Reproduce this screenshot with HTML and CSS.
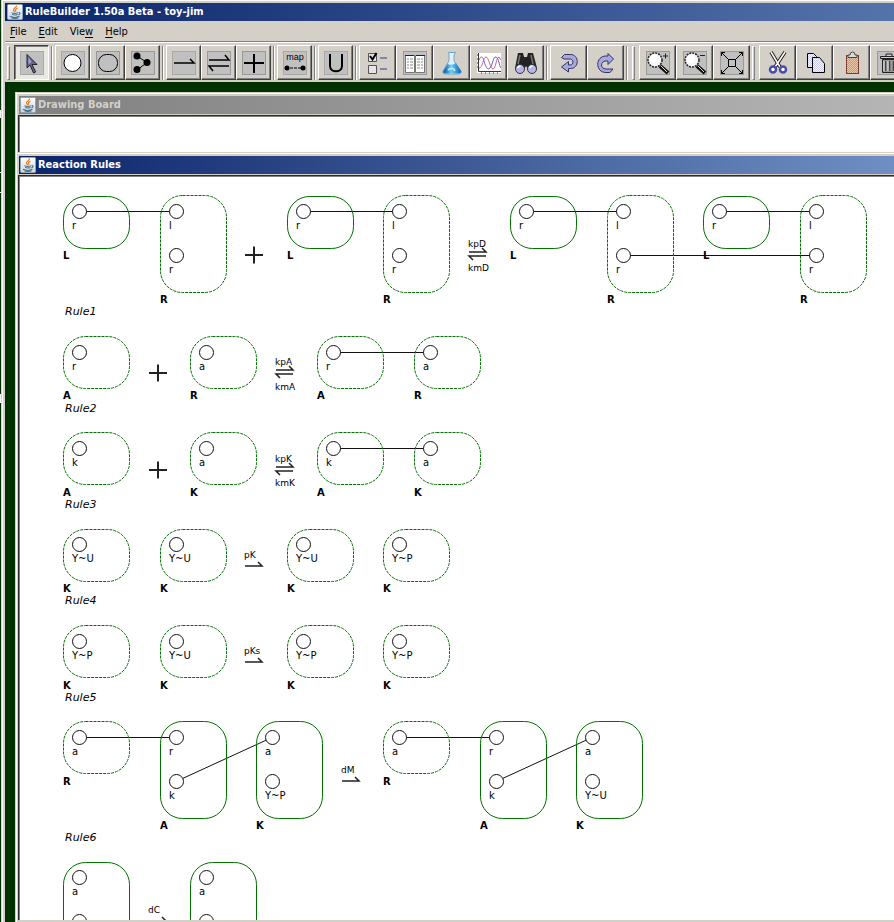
FILE: index.html
```html
<!DOCTYPE html>
<html lang="en">
<head>
<meta charset="utf-8">
<title>RuleBuilder 1.50a Beta - toy-jim</title>
<link rel="stylesheet" href="styles.css">
</head>
<body>
<svg class="defs" aria-hidden="true">
  <defs>
    <linearGradient id="tile" x1="0" y1="0" x2="0" y2="1"><stop offset="0" stop-color="#fff"/><stop offset="1" stop-color="#ccd6dc"/></linearGradient>
    <linearGradient id="flask" x1="0" y1="0" x2="1" y2="0"><stop offset="0" stop-color="#0a4f9a"/><stop offset=".45" stop-color="#6fd0f5"/><stop offset="1" stop-color="#0b62b4"/></linearGradient>
    <pattern id="weave" width="2" height="2" patternUnits="userSpaceOnUse"><rect width="2" height="2" fill="#e8c8a8"/><path d="M0 0h1v1H0zM1 1h1v1H1z" fill="#c49a7c"/></pattern>
    <pattern id="lilac" width="2" height="2" patternUnits="userSpaceOnUse"><rect width="2" height="2" fill="#f4f4ff"/><path d="M0 0h1v1H0zM1 1h1v1H1z" fill="#ccccee"/></pattern>
    <symbol id="java" viewBox="0 0 16 16">
      <rect x=".5" y=".5" width="15" height="15" rx="1" fill="url(#tile)" stroke="#8fa5b5"/>
      <path d="M9.5 1.5C10 3.5 6 4.500 6.500 6c.2.800 1 1.200 1 2M10.500 4C8.500 5 8 5.800 9 7.800" fill="none" stroke="#ee7d22" stroke-width="1.300"/>
      <path d="M4.500 8.800c2 .700 4.500.700 6.500 0M5 10.500c2 .600 4 .600 5.500 0M11.500 8.500c2.200-.300 2 1.800-.300 2.500M3 12.300c2.500 1.200 7 1.200 9.500 0M4.500 14c2 .500 5 .500 7 0" fill="none" stroke="#4a7390" stroke-width="1.100"/>
    </symbol>
    <rect id="short" x=".5" y=".5" width="66" height="52" rx="22"/>
    <rect id="tall" x=".5" y=".5" width="66" height="97" rx="22"/>
    <circle id="site" cx="16.500" cy="16.500" r="7"/>
    <path id="plus" d="M-9 0H9M0-8.500V8.500"/>
    <path id="forward" d="M0 0H17L13-4"/>
    <g id="both"><path d="M0-2H17L13-6"/><path d="M17 2H0L4 6"/></g>
  </defs>
</svg>

<div class="edge"></div>
<div class="app">
  <header class="titlebar main-title"><svg class="cup"><use href="#java"/></svg><h1>RuleBuilder 1.50a Beta - toy-jim</h1></header>

  <nav class="menu">
    <button type="button"><u>F</u>ile</button>
    <button type="button"><u>E</u>dit</button>
    <button type="button">Vie<u>w</u></button>
    <button type="button"><u>H</u>elp</button>
  </nav>

  <div class="toolbar">
    <span class="grip"></span>
    <button type="button" class="tool selected" aria-label="Select"><svg class="boxed"><path d="M7 3.500V17l3-3 3.500 8 2.200-1L12 13.500h5z" fill="#666699" stroke="#222"/><path d="M8.500 6v7l3-2z" fill="#a5a5dc"/></svg></button>
    <span class="rule"></span>
    <button type="button" class="tool" aria-label="Component"><svg class="boxed"><circle cx="11.500" cy="12" r="8.500" fill="#fff" stroke="#000"/></svg></button>
    <button type="button" class="tool" aria-label="Molecule"><svg class="boxed"><rect x="2.500" y="3.500" width="19" height="17" rx="8" fill="none" stroke="#000"/></svg></button>
    <button type="button" class="tool" aria-label="Bond"><svg class="boxed"><path d="M6 5l10 6.500L6 19" fill="none" stroke="#000"/><circle cx="6" cy="5" r="3.500"/><circle cx="16" cy="11.500" r="3.500"/><circle cx="6" cy="18.500" r="3.500"/></svg></button>
    <span class="rule"></span>
    <button type="button" class="tool" aria-label="Forward arrow"><svg class="boxed"><path d="M2 12h20l-4-4" fill="none" stroke="#000" stroke-width="1.500"/></svg></button>
    <button type="button" class="tool" aria-label="Reversible arrow"><svg class="boxed"><path d="M2 9h20l-4-5M22 15H2l4 5" fill="none" stroke="#000" stroke-width="1.500"/></svg></button>
    <button type="button" class="tool" aria-label="Plus"><svg class="boxed"><path d="M2 12h20M12 3v19" stroke="#000" stroke-width="2"/></svg></button>
    <span class="rule"></span>
    <button type="button" class="tool" aria-label="Map"><svg class="boxed"><text x="12" y="9" class="maptext">map</text><path d="M3 17h18" stroke="#000" stroke-dasharray="3 1"/><circle cx="4" cy="17" r="2.500"/><circle cx="20" cy="17" r="2.500"/></svg></button>
    <span class="rule"></span>
    <button type="button" class="tool" aria-label="Union"><svg class="boxed"><path d="M6 3v12c0 7 12 7 12 0V3" fill="none" stroke="#000" stroke-width="2"/></svg></button>
    <span class="rule"></span>
    <button type="button" class="tool wide" aria-label="Options"><svg><path d="M2.500 2.500h8v8h-8zM2.500 14.500h8v8h-8z" fill="#e4e4e4" stroke="#555"/><path d="M4 5l2.500 3.500L10.500 2" fill="none" stroke="#000" stroke-width="2"/><path d="M14 7h7M14 18h7" stroke="#6a6aa8" stroke-width="1.500"/></svg></button>
    <button type="button" class="tool wide" aria-label="Parameters"><svg class="boxed"><path d="M2.500 4.500h9v17h-9zM12.500 4.500h9v17h-9z" fill="#fff" stroke="#777"/><path d="M2 4.500h9M13 4.500h9" stroke="#222"/><path d="M4 8h2M7 8h3M4 11h2M7 11h3M4 14h2M7 14h3M4 17h2M7 17h3M14 8h3M18 8h2M14 11h3M18 11h2M14 14h3M18 14h2M14 17h3M18 17h2" stroke="#888"/></svg></button>
    <button type="button" class="tool wide" aria-label="Simulate"><svg><path d="M8.500 1.500h7L14 4v6l7 10q1 3-3 3H6q-4 0-3-3l6-10V4z" fill="#e2f2fb" stroke="#6fa3c8"/><path d="M7.500 13q4 2 8.500-1l5 8q.500 2.500-3 2.500H6q-3.500 0-2.500-2.500z" fill="url(#flask)"/><path d="M8 19q5-4 7 1" fill="none" stroke="#c6f1ff" stroke-width="1.500"/></svg></button>
    <button type="button" class="tool wide" aria-label="Plot"><svg><path d="M0 2h24v20H0z" fill="#fff"/><path d="M1.500 2v18.500H24" fill="none" stroke="#333"/><path d="M0 4h1M0 8h1M0 12h1M0 16h1M4 22h1M8 22h1M12 22h1M16 22h1M20 22h1" stroke="#333"/><path d="M2 17C6 17 6 6 9 6s4 12 7 12 3-12 6-12l2 3" fill="none" stroke="#e06070"/><path d="M2 9c2-5 4-3 5 1s3 10 6 7 3-12 6-11 3 9 5 11" fill="none" stroke="#5a6be0"/></svg></button>
    <button type="button" class="tool wide" aria-label="Find"><svg><path d="M4 2h5l1 4h3l1-4h5l4 15-8 3-3-5-3 5-8-3z" fill="#222"/><path d="M6 4L4 13M17 4l2 9" stroke="#777" stroke-width="1.500"/><circle cx="6" cy="18" r="4.500" fill="#b4b4ee" stroke="#333"/><circle cx="18" cy="18" r="4.500" fill="#b4b4ee" stroke="#333"/><path d="M3.500 17q1-2 3-2M15.500 17q1-2 3-2" fill="none" stroke="#fff" stroke-width="1.500"/></svg></button>
    <span class="rule"></span>
    <button type="button" class="tool wide" aria-label="Undo"><svg><path d="M4.500 6.500l3-3h6c9 0 9 14 0 14h-2v3.500L4.500 16l7-5.500V14h1.500c4 0 4-6 0-6H7z" fill="#a8a8e0" stroke="#333366"/></svg></button>
    <button type="button" class="tool wide" aria-label="Redo"><svg><path d="M19.500 8L14 2.500V5h-2C1 5 1 21.500 12 21.500h4l3-3.500h-7c-6 0-6-8 0-8h2v3.500z" fill="#a8a8e0" stroke="#333366"/></svg></button>
    <span class="rule"></span>
    <span class="grip"></span>
    <button type="button" class="tool wide" aria-label="Zoom in"><svg class="boxed"><path d="M14 15l8 7" stroke="#111" stroke-width="4"/><path d="M15 15l6 6" stroke="#ddd"/><circle cx="9" cy="9" r="7" fill="#f6f6f6" stroke="#222" stroke-dasharray="2 1" stroke-width="1.500"/><circle cx="8" cy="8" r="4" fill="#fff"/><path d="M17 5h5M19.500 2.500v5" stroke="#222"/></svg></button>
    <button type="button" class="tool wide" aria-label="Zoom out"><svg class="boxed"><path d="M14 15l8 7" stroke="#111" stroke-width="4"/><path d="M15 15l6 6" stroke="#ddd"/><circle cx="9" cy="9" r="7" fill="#f6f6f6" stroke="#222" stroke-dasharray="2 1" stroke-width="1.500"/><circle cx="8" cy="8" r="4" fill="#fff"/><path d="M17 4.500h5" stroke="#222"/></svg></button>
    <button type="button" class="tool wide" aria-label="Fit to window"><svg class="boxed"><path d="M8.500 8.500h7v7h-7zM8.500 8.500l-7-7M15.500 8.500l7-7M8.500 15.500l-7 7M15.500 15.500l7 7M1.500 5V1.500H5M19 1.500h3.500V5M1.500 19v3.500H5M19 22.500h3.500V19" fill="none" stroke="#000"/></svg></button>
    <span class="grip"></span>
    <button type="button" class="tool wide" aria-label="Cut"><svg><path d="M5 1l9 15M19 1L9 16" stroke="#222" stroke-width="3.500"/><path d="M5 1l9 15M19 1L9 16" stroke="#fff" stroke-width="1.500"/><circle cx="7" cy="18.500" r="3" fill="#fff" stroke="#4c4cae" stroke-width="2.500"/><circle cx="17" cy="18.500" r="3" fill="#fff" stroke="#4c4cae" stroke-width="2.500"/></svg></button>
    <button type="button" class="tool wide" aria-label="Copy"><svg><path d="M4.500 2.500h6l3 3v11h-9z" fill="url(#lilac)" stroke="#000"/><path d="M9.500 6.500h7l5 6v9h-12z" fill="url(#lilac)" stroke="#000"/></svg></button>
    <button type="button" class="tool wide" aria-label="Paste"><svg><rect x="6.500" y="4.500" width="12" height="18" fill="url(#weave)" stroke="#7d3d35"/><path d="M8 6.500V4h2q0-3 2.500-3T15 4h2v2.500z" fill="#ddd" stroke="#444"/></svg></button>
    <button type="button" class="tool wide" aria-label="Delete"><svg class="boxed"><path d="M3.500 5.500h17v2h-17zM9 5V3h6v2" fill="#ccc" stroke="#222"/><path d="M5.500 8.500h13v13h-13z" fill="#999" stroke="#222"/><path d="M8.500 10v10M12.500 10v10M16.500 10v10" stroke="#444" stroke-width="1.500"/><path d="M7 10v10M11 10v10" stroke="#eee"/></svg></button>
  </div>

  <main class="desktop">
    <section class="frame">
      <header class="titlebar inactive"><svg class="cup"><use href="#java"/></svg><h2>Drawing Board</h2></header>
      <div class="pane board"></div>
    </section>

    <section class="frame rules-frame">
      <header class="titlebar active"><svg class="cup"><use href="#java"/></svg><h2>Reaction Rules</h2></header>
      <div class="pane rules">
        <svg class="reaction" height="140">
          <path class="bond" d="M19 15.500H116M243 15.500H339M466 15.500H563M659 15.500H756M563 59.500H756"/>
          <g transform="translate(3)"><use href="#short"/><use href="#site" y="-1"/><text x="9" y="33">r</text><text class="name" y="63">L</text></g>
          <g transform="translate(100)"><use class="dash" href="#tall" y="-1"/><use href="#site" y="-1"/><text x="9" y="33">l</text><use href="#site" y="43"/><text x="9" y="77">r</text><text class="name" y="107">R</text></g>
          <use class="sign" href="#plus" x="194" y="59"/>
          <g transform="translate(227)"><use href="#short"/><use href="#site" y="-1"/><text x="9" y="33">r</text><text class="name" y="63">L</text></g>
          <g transform="translate(323)"><use class="dash" href="#tall" y="-1"/><use href="#site" y="-1"/><text x="9" y="33">l</text><use href="#site" y="43"/><text x="9" y="77">r</text><text class="name" y="107">R</text></g>
          <use class="sign" href="#both" x="409" y="58"/><text class="rate" x="408" y="51">kpD</text><text class="rate" x="408" y="75">kmD</text>
          <g transform="translate(450)"><use href="#short"/><use href="#site" y="-1"/><text x="9" y="33">r</text><text class="name" y="63">L</text></g>
          <g transform="translate(547)"><use class="dash" href="#tall" y="-1"/><use href="#site" y="-1"/><text x="9" y="33">l</text><use href="#site" y="43"/><text x="9" y="77">r</text><text class="name" y="107">R</text></g>
          <g transform="translate(643)"><use href="#short"/><use href="#site" y="-1"/><text x="9" y="33">r</text><text class="name" y="63">L</text></g>
          <g transform="translate(740)"><use class="dash" href="#tall" y="-1"/><use href="#site" y="-1"/><text x="9" y="33">l</text><use href="#site" y="43"/><text x="9" y="77">r</text><text class="name" y="107">R</text></g>
          <text class="label" x="5" y="119">Rule1</text>
        </svg>
        <svg class="reaction" height="96">
          <path class="bond" d="M273 16.500H370"/>
          <g transform="translate(3)"><use class="dash" href="#short"/><use href="#site"/><text x="9" y="34">r</text><text class="name" y="63">A</text></g>
          <use class="sign" href="#plus" x="98" y="37"/>
          <g transform="translate(130)"><use class="dash" href="#short"/><use href="#site"/><text x="9" y="34">a</text><text class="name" y="63">R</text></g>
          <use class="sign" href="#both" x="216" y="36"/><text class="rate" x="215" y="29">kpA</text><text class="rate" x="215" y="54">kmA</text>
          <g transform="translate(257)"><use class="dash" href="#short"/><use href="#site"/><text x="9" y="34">r</text><text class="name" y="63">A</text></g>
          <g transform="translate(354)"><use class="dash" href="#short"/><use href="#site"/><text x="9" y="34">a</text><text class="name" y="63">R</text></g>
          <text class="label" x="5" y="76">Rule2</text>
        </svg>
        <svg class="reaction" height="97">
          <path class="bond" d="M273 16.500H370"/>
          <g transform="translate(3)"><use class="dash" href="#short"/><use href="#site"/><text x="9" y="34">k</text><text class="name" y="64">A</text></g>
          <use class="sign" href="#plus" x="98" y="38"/>
          <g transform="translate(130)"><use class="dash" href="#short"/><use href="#site"/><text x="9" y="34">a</text><text class="name" y="64">K</text></g>
          <use class="sign" href="#both" x="216" y="37"/><text class="rate" x="215" y="30">kpK</text><text class="rate" x="215" y="54">kmK</text>
          <g transform="translate(257)"><use class="dash" href="#short"/><use href="#site"/><text x="9" y="34">k</text><text class="name" y="64">A</text></g>
          <g transform="translate(354)"><use class="dash" href="#short"/><use href="#site"/><text x="9" y="34">a</text><text class="name" y="64">K</text></g>
          <text class="label" x="5" y="76">Rule3</text>
        </svg>
        <svg class="reaction" height="96">
          <g transform="translate(3)"><use class="dash" href="#short"/><use href="#site" y="-1"/><text x="9" y="33">Y~U</text><text class="name" y="63">K</text></g>
          <g transform="translate(100)"><use class="dash" href="#short"/><use href="#site" y="-1"/><text x="9" y="33">Y~U</text><text class="name" y="63">K</text></g>
          <use class="sign" href="#forward" x="185" y="37"/><text class="rate" x="184" y="29">pK</text>
          <g transform="translate(227)"><use class="dash" href="#short"/><use href="#site" y="-1"/><text x="9" y="33">Y~U</text><text class="name" y="63">K</text></g>
          <g transform="translate(323)"><use class="dash" href="#short"/><use href="#site" y="-1"/><text x="9" y="33">Y~P</text><text class="name" y="63">K</text></g>
          <text class="label" x="5" y="75">Rule4</text>
        </svg>
        <svg class="reaction" height="96">
          <g transform="translate(3)"><use class="dash" href="#short"/><use href="#site"/><text x="9" y="34">Y~P</text><text class="name" y="64">K</text></g>
          <g transform="translate(100)"><use class="dash" href="#short"/><use href="#site"/><text x="9" y="34">Y~U</text><text class="name" y="64">K</text></g>
          <use class="sign" href="#forward" x="185" y="37"/><text class="rate" x="184" y="29">pKs</text>
          <g transform="translate(227)"><use class="dash" href="#short"/><use href="#site"/><text x="9" y="34">Y~P</text><text class="name" y="64">K</text></g>
          <g transform="translate(323)"><use class="dash" href="#short"/><use href="#site"/><text x="9" y="34">Y~P</text><text class="name" y="64">K</text></g>
          <text class="label" x="5" y="76">Rule5</text>
        </svg>
        <svg class="reaction" height="141">
          <path class="bond" d="M19 16.500H116M116 60.500L212 16.500M339 16.500H436M436 60.500L532 16.500"/>
          <g transform="translate(3)"><use class="dash" href="#short"/><use href="#site"/><text x="9" y="34">a</text><text class="name" y="64">R</text></g>
          <g transform="translate(100)"><use href="#tall"/><use href="#site"/><text x="9" y="34">r</text><use href="#site" y="44"/><text x="9" y="78">k</text><text class="name" y="108">A</text></g>
          <g transform="translate(196)"><use href="#tall"/><use href="#site"/><text x="9" y="34">a</text><use href="#site" y="44"/><text x="9" y="78">Y~P</text><text class="name" y="108">K</text></g>
          <use class="sign" href="#forward" x="282" y="60"/><text class="rate" x="281" y="52">dM</text>
          <g transform="translate(323)"><use class="dash" href="#short"/><use href="#site"/><text x="9" y="34">a</text><text class="name" y="64">R</text></g>
          <g transform="translate(420)"><use href="#tall"/><use href="#site"/><text x="9" y="34">r</text><use href="#site" y="44"/><text x="9" y="78">k</text><text class="name" y="108">A</text></g>
          <g transform="translate(516)"><use href="#tall"/><use href="#site"/><text x="9" y="34">a</text><use href="#site" y="44"/><text x="9" y="78">Y~U</text><text class="name" y="108">K</text></g>
          <text class="label" x="5" y="120">Rule6</text>
        </svg>
        <svg class="reaction" height="141">
          <g transform="translate(3)"><use href="#tall"/><use href="#site" y="-1"/><text x="9" y="33">a</text><use href="#site" y="43"/></g>
          <use class="sign" href="#forward" x="89" y="59"/><text class="rate" x="88" y="51">dC</text>
          <g transform="translate(130)"><use href="#tall"/><use href="#site" y="-1"/><text x="9" y="33">a</text><use href="#site" y="43"/></g>
        </svg>
      </div>
    </section>
  </main>
</div>
</body>
</html>
```
FILE: styles.css
```css
* { box-sizing: border-box; }

body {
  margin: 0;
  height: 100vh;
  display: flex;
  overflow: hidden;
  background: #d4d0c8;
  color: #000;
  font-family: "DejaVu Sans Condensed", "DejaVu Sans", sans-serif;
  font-size: 11px;
}

svg { display: block; }

.defs {
  position: absolute;
  width: 0;
  height: 0;
}

.edge {
  flex: none;
  width: 1px;
  background: linear-gradient(#003200 110px, #fff 110px 118px, #003200 118px 172px, #fff 172px 173px, #003200 173px 192px, #fff 192px 193px, #003200 193px 394px, #fff 394px 403px, #003200 403px);
}

.app {
  flex: 1;
  min-width: 0;
  display: flex;
  flex-direction: column;
  margin-left: 1px;
  padding: 1px 0 0 2px;
  border-left: 1px solid #fff;
  box-shadow: inset 0 1px #fff;
}

.titlebar {
  flex: none;
  display: flex;
  align-items: center;
  gap: 2px;
  height: 18px;
  padding-left: 1px;
  color: #fff;
}

.main-title {
  margin-top: 2px;
  padding-left: 2px;
  background: linear-gradient(90deg, #0a246a, #5573ab);
}

.inactive {
  color: #d4d0c8;
  background: linear-gradient(90deg, #808080, #b5b5b5);
}

.active { background: linear-gradient(90deg, #0a246a, #6f8fc2); }

.titlebar h1,
.titlebar h2 {
  margin: 0;
  font-size: 11px;
  line-height: 16px;
  font-weight: bold;
  white-space: nowrap;
}

.cup {
  flex: none;
  width: 16px;
  height: 16px;
}

.menu {
  flex: none;
  display: flex;
  gap: 12px;
  height: 21px;
  padding-left: 5px;
  border-bottom: 1px solid #808080;
}

.menu button {
  padding: 0;
  border: 0;
  background: none;
  font: inherit;
  color: inherit;
}

.menu u { text-underline-offset: 2px; }

.toolbar {
  flex: none;
  display: flex;
  align-items: center;
  height: 40px;
  border-top: 1px solid #fff;
  overflow: hidden;
}

.grip {
  flex: none;
  width: 3px;
  height: 34px;
  margin: 0 4px 0 2px;
  border: 1px solid #808080;
  border-top-color: #fff;
  border-left-color: #fff;
}

.rule {
  flex: none;
  width: 2px;
  height: 34px;
  margin: 0 2px;
  border-left: 1px solid #808080;
  border-right: 1px solid #fff;
}

.tool {
  flex: none;
  display: grid;
  place-items: center;
  width: 35px;
  height: 35px;
  padding: 0;
  background: #d4d0c8;
  border: 1px solid #404040;
  border-top-color: #fff;
  border-left-color: #fff;
  box-shadow: inset -1px -1px #808080;
}

.wide { width: 37px; }

.selected {
  background: #eae8e3;
  border-color: #404040 #fff #fff #404040;
  box-shadow: inset 1px 1px #808080;
}

.tool svg {
  width: 24px;
  height: 24px;
}

.boxed {
  background: #c0c0c0;
  box-shadow: inset 0 0 0 1px #999;
}

.selected .boxed,
.rule + .tool .boxed { box-shadow: inset 0 0 0 1px #a8a8a8; }

.maptext {
  font-size: 9px;
  text-anchor: middle;
}

.desktop {
  flex: 1;
  min-height: 0;
  display: flex;
  flex-direction: column;
  padding: 10px 0 0 10px;
  background: #003200;
}

.frame {
  flex: none;
  display: flex;
  flex-direction: column;
  padding: 3px 0 0 2px;
  border-left: 1px solid #d4d0c8;
  background: #d4d0c8;
  box-shadow: inset 1px 0 #fff, inset 0 1px #d4d0c8, inset 0 2px #fff;
}

.frame .titlebar {
  margin: 1px 0 1px 1px;
}

.pane {
  border-top: 2px solid #404040;
  border-left: 2px solid #404040;
  border-top-style: groove;
  border-left-style: groove;
  border-color: #808080;
  background: #fff;
}

.board { height: 37px; }

.rules-frame {
  flex: 1;
  min-height: 0;
  padding-bottom: 2px;
}

.rules {
  flex: 1;
  min-height: 0;
  overflow: hidden;
  padding: 19px 0 0 40px;
}

.reaction {
  width: 100%;
  overflow: visible;
  font-family: "DejaVu Sans", sans-serif;
  font-size: 10px;
}

.reaction use {
  fill: none;
  stroke: #007000;
}

.reaction .dash { stroke-dasharray: 3 1; }

.reaction use[href="#site"] {
  fill: #fff;
  stroke: #111;
}

.reaction .sign {
  stroke: #222;
  stroke-width: 2;
}

.reaction .sign[href="#both"],
.reaction .sign[href="#forward"] { stroke-width: 1.5; }

.bond {
  fill: none;
  stroke: #111;
}

.name { font-weight: bold; }

.rate { font-size: 9px; }

.label {
  font-size: 11px;
  font-style: italic;
}
```
